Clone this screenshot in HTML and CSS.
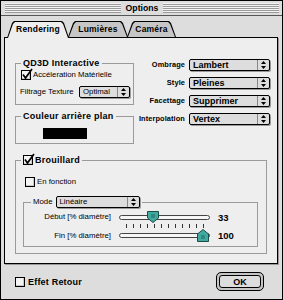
FILE: index.html
```html
<!DOCTYPE html>
<html lang="fr">
<head>
    <meta charset="UTF-8">
    <meta name="viewport" content="width=device-width, initial-scale=1.0">
    <title>Options</title>
    <link rel="stylesheet" href="styles.css">
</head>
<body>
    <div class="window">
        <div class="titlebar">
            <div class="ridges"></div>
            <span class="title">Options</span>
            <div class="ridges"></div>
        </div>

        <div class="tabs">
            <div class="tab tab-rendering active">Rendering</div>
            <div class="tab tab-lumieres">Lumières</div>
            <div class="tab tab-camera">Caméra</div>
        </div>

        <div class="panel">
            <div class="top">
                <div class="left-col">
                    <fieldset class="group qd3d">
                        <legend>QD3D Interactive</legend>
                        <div class="check-row">
                            <span class="checkbox checked">
                                <svg width="13" height="13" viewBox="0 0 13 13"><path d="M2 6.5 L4.5 10 L11 1" fill="none" stroke="#000" stroke-width="1.7"/></svg>
                            </span>
                            <span class="small">Accéleration Matérielle</span>
                        </div>
                        <div class="field-row">
                            <span class="small">Filtrage Texture</span>
                            <div class="popup popup-optimal">
                                <span class="popup-value small">Optimal</span>
                                <span class="popup-arrows"><svg width="5" height="8" viewBox="0 0 5 8"><path d="M2.5 0 L5 3 H0 Z M0 5 H5 L2.5 8 Z" fill="#000"/></svg></span>
                            </div>
                        </div>
                    </fieldset>

                    <fieldset class="group couleur">
                        <legend>Couleur arrière plan</legend>
                        <div class="swatch"></div>
                    </fieldset>
                </div>

                <div class="right-col">
                    <span class="label">Ombrage</span>
                    <div class="popup">
                        <span class="popup-value">Lambert</span>
                        <span class="popup-arrows"><svg width="5" height="8" viewBox="0 0 5 8"><path d="M2.5 0 L5 3 H0 Z M0 5 H5 L2.5 8 Z" fill="#000"/></svg></span>
                    </div>
                    <span class="label">Style</span>
                    <div class="popup">
                        <span class="popup-value">Pleines</span>
                        <span class="popup-arrows"><svg width="5" height="8" viewBox="0 0 5 8"><path d="M2.5 0 L5 3 H0 Z M0 5 H5 L2.5 8 Z" fill="#000"/></svg></span>
                    </div>
                    <span class="label">Facettage</span>
                    <div class="popup">
                        <span class="popup-value">Supprimer</span>
                        <span class="popup-arrows"><svg width="5" height="8" viewBox="0 0 5 8"><path d="M2.5 0 L5 3 H0 Z M0 5 H5 L2.5 8 Z" fill="#000"/></svg></span>
                    </div>
                    <span class="label">Interpolation</span>
                    <div class="popup">
                        <span class="popup-value">Vertex</span>
                        <span class="popup-arrows"><svg width="5" height="8" viewBox="0 0 5 8"><path d="M2.5 0 L5 3 H0 Z M0 5 H5 L2.5 8 Z" fill="#000"/></svg></span>
                    </div>
                </div>
            </div>

            <fieldset class="group brouillard">
                <legend>
                    <span class="checkbox checked">
                        <svg width="13" height="13" viewBox="0 0 13 13"><path d="M2 6.5 L4.5 10 L11 1" fill="none" stroke="#000" stroke-width="1.7"/></svg>
                    </span>
                    Brouillard
                </legend>
                <div class="check-row en-fonction">
                    <span class="checkbox"></span>
                    <span class="small">En fonction</span>
                </div>

                <fieldset class="group mode">
                    <legend>
                        <span class="small">Mode</span>
                        <div class="popup popup-mode">
                            <span class="popup-value small">Linéaire</span>
                            <span class="popup-arrows"><svg width="5" height="8" viewBox="0 0 5 8"><path d="M2.5 0 L5 3 H0 Z M0 5 H5 L2.5 8 Z" fill="#000"/></svg></span>
                        </div>
                    </legend>
                    <div class="sliders">
                        <span class="small slider-label">Début [% diamètre]</span>
                        <div class="slider">
                            <div class="track"></div>
                            <svg class="thumb" style="left: 28px" width="12" height="12" viewBox="0 0 12 12">
                                <path d="M0.5 0.5 H11.5 V7 L6 11.5 L0.5 7 Z" fill="#40aaa1" stroke="#1d4d49"/>
                                <path d="M5 3 V7 M7 3 V7" stroke="#23625d"/>
                            </svg>
                        </div>
                        <span class="value">33</span>

                        <div class="ticks"></div>

                        <span class="small slider-label">Fin [% diamètre]</span>
                        <div class="slider">
                            <div class="track"></div>
                            <svg class="thumb" style="left: 78px" width="12" height="13" viewBox="0 0 12 13">
                                <path d="M6 0.5 L11.5 5 V12.5 H0.5 V5 Z" fill="#40aaa1" stroke="#1d4d49"/>
                                <path d="M5 6 V10 M7 6 V10" stroke="#23625d"/>
                            </svg>
                        </div>
                        <span class="value">100</span>
                    </div>
                </fieldset>
            </fieldset>
        </div>

        <div class="footer">
            <div class="check-row">
                <span class="checkbox"></span>
                <span class="footer-label">Effet Retour</span>
            </div>
            <div class="ok-ring">
                <button class="ok">OK</button>
            </div>
        </div>
    </div>
</body>
</html>
```

FILE: styles.css
```css
* {
    margin: 0;
    padding: 0;
    box-sizing: border-box;
}

body {
    font-family: "Liberation Sans", Arial, sans-serif;
    color: #000;
    background: #fff;
    width: 283px;
    height: 300px;
    overflow: hidden;
}

.window {
    width: 283px;
    height: 300px;
    border: 1px solid #000;
    background: #dddddd;
    display: flex;
    flex-direction: column;
}

/* Title bar */
.titlebar {
    height: 15px;
    flex: none;
    border-bottom: 1px solid #555;
    display: flex;
    align-items: center;
    gap: 4px;
    padding: 0 3px 0 4px;
}

.ridges {
    flex: 1;
    height: 10px;
    background: repeating-linear-gradient(to bottom, #f4f4f4 0 1px, #9a9a9a 1px 2px);
}

.title {
    font-weight: bold;
    font-size: 8.7px;
    line-height: 12px;
    padding: 0 1px;
}

/* Tabs */
.tabs {
    height: 21px;
    flex: none;
    display: flex;
    align-items: flex-end;
    padding-left: 6px;
    position: relative;
    z-index: 1;
}

.tab {
    position: relative;
    isolation: isolate;
    height: 16px;
    line-height: 16px;
    text-align: center;
    font-weight: bold;
    font-size: 8.5px;
    letter-spacing: 0.2px;
}

.tab::before,
.tab::after {
    content: "";
    position: absolute;
    z-index: -1;
    clip-path: polygon(0 100%, 5px 2px, 7px 0, calc(100% - 7px) 0, calc(100% - 5px) 2px, 100% 100%);
}

.tab::before {
    inset: 0;
    background: #000;
}

.tab::after {
    inset: 1px 1px 0 1px;
    background: #c6c6c6;
}

.tab.active {
    height: 17px;
    margin-bottom: -1px;
    padding-bottom: 1px;
    z-index: 2;
}

.tab.active::after {
    background: #eeeeee;
}

.tab-rendering { width: 62px; }
.tab-lumieres { width: 60px; margin-left: -1px; }
.tab-camera { width: 49px; margin-left: -1px; }

/* Tab panel */
.panel {
    height: 227px;
    flex: none;
    margin: 0 4px 0 3px;
    border: 1px solid #000;
    background: #eeeeee;
    box-shadow: 1px 1px 0 #999;
    padding: 0 7px 0 10px;
}

.top {
    display: grid;
    grid-template-columns: 119px 1fr;
    align-items: start;
}

.left-col {
    padding-top: 20px;
}

.right-col {
    padding-top: 21px;
    display: grid;
    grid-template-columns: auto 81px;
    justify-content: end;
    align-items: center;
    column-gap: 4px;
    row-gap: 6px;
}

/* Group boxes */
.group {
    border: 1px solid #9a9a9a;
    min-width: 0;
}

.group > legend {
    padding: 0 2px;
    font-weight: bold;
    font-size: 9px;
    line-height: 10px;
    letter-spacing: 0.25px;
}

.qd3d {
    padding: 2px 3px 6px 5px;
}

.couleur {
    margin-top: 6px;
    padding: 7px 3px 4px 5px;
}

.brouillard {
    margin: 11px 3px 0 0;
    padding: 12px 8px 6px 5px;
}

.brouillard > legend {
    display: flex;
    align-items: center;
    gap: 2px;
}

.mode {
    margin: 9px 0 0 2px;
    padding: 3px 4px 4px 7px;
}

.mode > legend {
    display: flex;
    align-items: center;
    gap: 3px;
    font-weight: normal;
    letter-spacing: 0;
    line-height: 12px;
}

/* Text */
.small {
    font-size: 7.8px;
    font-weight: normal;
    line-height: 10px;
    letter-spacing: 0;
    white-space: nowrap;
}

.label {
    font-weight: bold;
    font-size: 7.4px;
    letter-spacing: 0.1px;
    text-align: right;
    line-height: 12px;
    white-space: nowrap;
}

/* Checkboxes */
.check-row {
    display: flex;
    align-items: center;
    gap: 2px;
    height: 10px;
}

.checkbox {
    position: relative;
    flex: none;
    width: 10px;
    height: 10px;
    border: 1px solid #000;
    background: #f4f4f4;
    box-shadow: inset -1px -1px 0 #c8c8c8;
}

.checkbox svg {
    position: absolute;
    left: -1px;
    top: -3px;
    overflow: visible;
}

.en-fonction {
    margin-left: 4px;
}

/* Popup menus */
.field-row {
    margin-top: 6px;
    display: flex;
    align-items: center;
    margin-left: -1px;
}

.popup {
    height: 12px;
    border: 1px solid #000;
    border-radius: 2px;
    background: #dddddd;
    box-shadow: 1px 1px 0 #999;
    display: flex;
    align-items: center;
}

.popup-optimal {
    width: 51px;
    margin-left: auto;
}

.popup-mode {
    width: 84px;
}

.popup-value {
    flex: 1;
    padding-left: 3px;
    font-weight: bold;
    font-size: 9px;
    line-height: 10px;
    white-space: nowrap;
    overflow: hidden;
}

.popup-value.small {
    font-weight: normal;
    font-size: 7.8px;
}

.popup-arrows {
    width: 12px;
    height: 100%;
    border-left: 1px solid #888;
    display: flex;
    align-items: center;
    justify-content: center;
}

.popup-arrows svg {
    display: block;
}

/* Colour swatch */
.swatch {
    width: 44px;
    height: 11px;
    margin-left: 22px;
    background: #000;
}

/* Sliders */
.sliders {
    display: grid;
    grid-template-columns: 80px 91px auto;
    grid-template-rows: 12px 6px 13px;
    column-gap: 8px;
    align-items: center;
}

.slider-label {
    grid-column: 1;
    text-align: right;
}

.slider {
    position: relative;
    height: 100%;
    display: flex;
    align-items: center;
}

.track {
    width: 100%;
    height: 5px;
    border: 1px solid #444;
    border-radius: 3px;
    background: #f6f6f6;
}

.thumb {
    position: absolute;
    top: 0;
}

.ticks {
    grid-column: 2;
    align-self: start;
    width: 78px;
    height: 4px;
    margin: 1px 0 0 7px;
    background: repeating-linear-gradient(to right, #333 0 1px, transparent 1px 7px);
}

.value {
    font-weight: bold;
    font-size: 9.5px;
}

/* Footer */
.footer {
    flex: 1;
    display: flex;
    align-items: center;
    justify-content: space-between;
    padding: 0 18px 0 14px;
}

.footer .check-row {
    gap: 3px;
}

.footer-label {
    font-weight: bold;
    font-size: 9px;
    letter-spacing: 0.2px;
}

.ok-ring {
    width: 48px;
    height: 19px;
    border: 1px solid #000;
    border-radius: 5px;
    padding: 2px;
    background: #c4c4c4;
}

.ok {
    display: block;
    width: 100%;
    height: 100%;
    border: 1px solid #000;
    border-radius: 3px;
    background: #dddddd;
    font-family: inherit;
    font-weight: bold;
    font-size: 9px;
    color: #000;
}
```
